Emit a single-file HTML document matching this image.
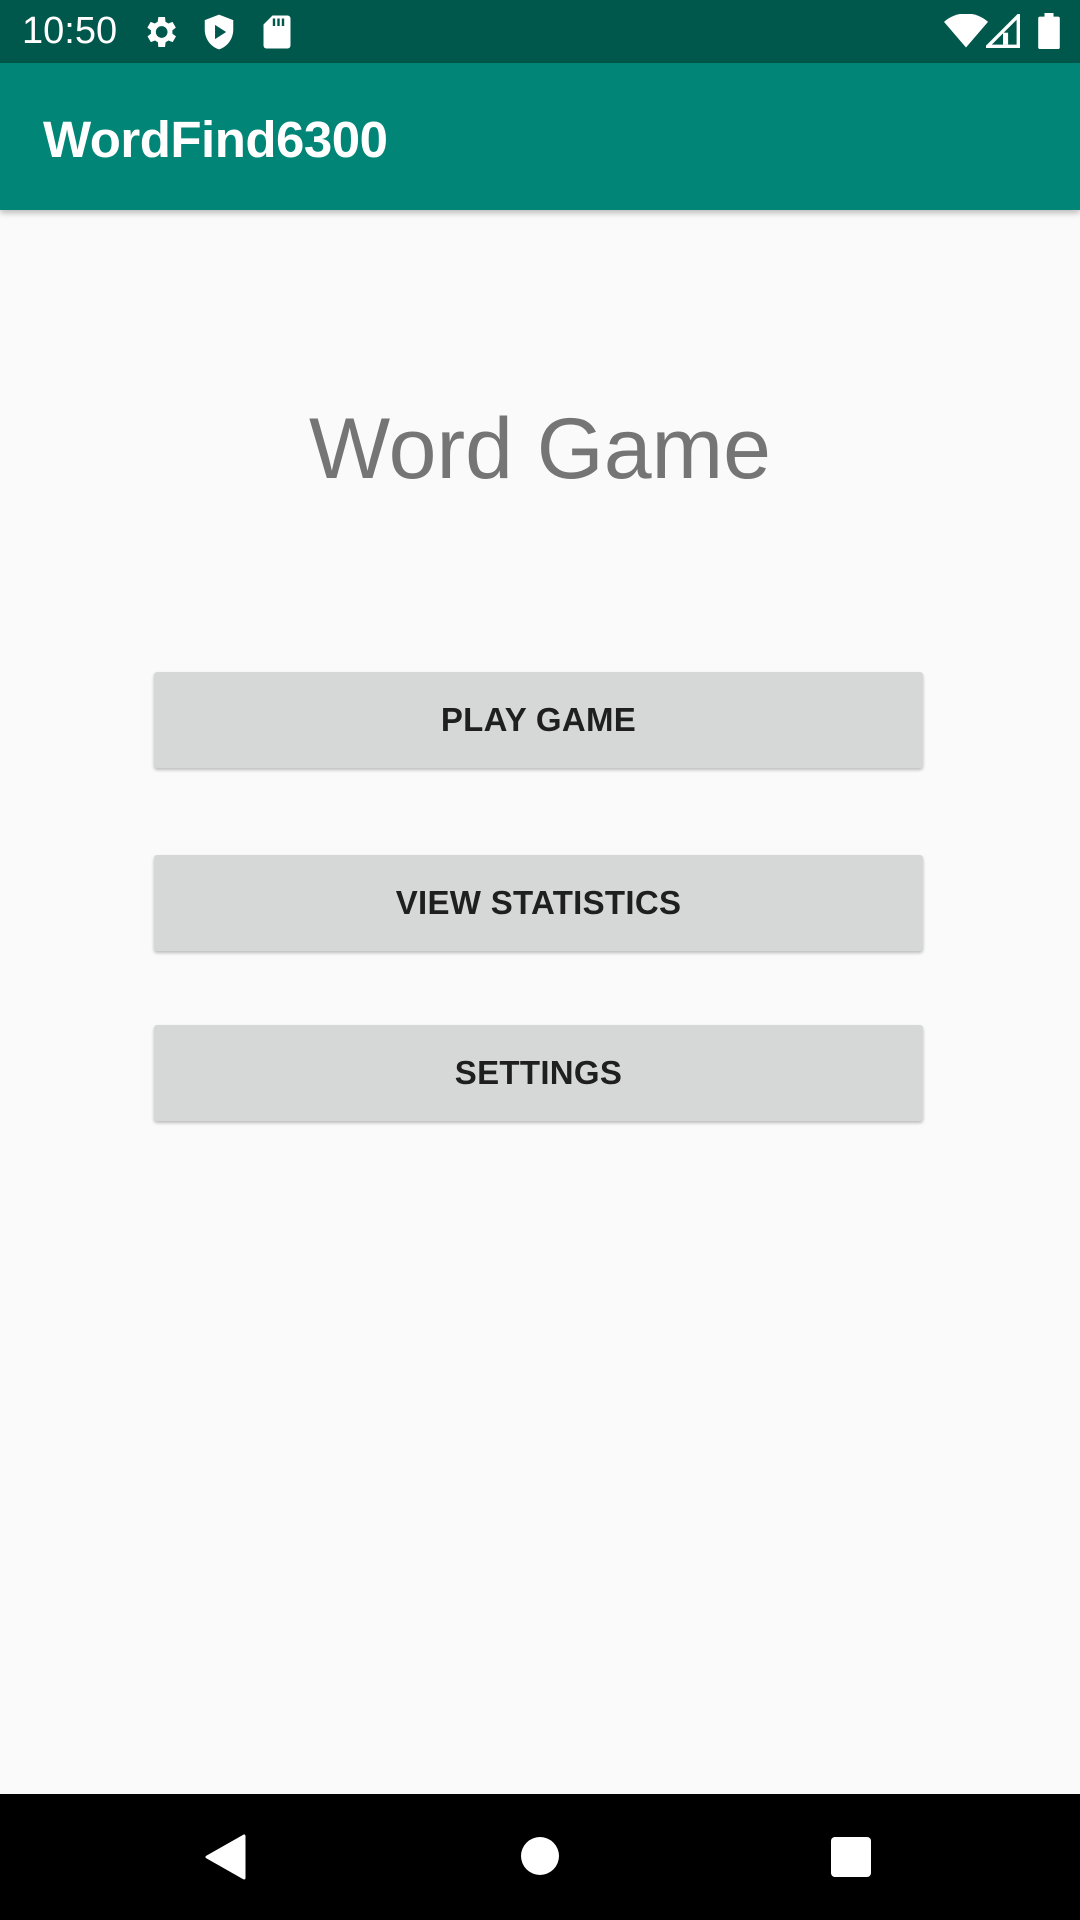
<!DOCTYPE html>
<html><head><meta charset="utf-8"><style>
*{margin:0;padding:0;box-sizing:border-box}
body{width:1080px;height:1920px;background:#fafafa;font-family:"Liberation Sans",Roboto,sans-serif;position:relative;overflow:hidden}
.sb{position:absolute;top:0;left:0;width:1080px;height:63px;background:#00574b;color:#fff}
.ab{position:absolute;top:63px;left:0;width:1080px;height:147px;background:#008577;box-shadow:0 3px 6px rgba(0,0,0,.25)}
.ab span{position:absolute;left:43px;top:47px;font-size:51px;color:#fff;font-weight:bold;letter-spacing:-0.5px}
.title{position:absolute;top:400px;left:0;width:1080px;text-align:center;font-size:86px;color:#757575}
.btn{position:absolute;left:154px;width:769px;height:96px;background:#d6d7d7;border-radius:3px;box-shadow:0 2px 3px rgba(0,0,0,.25);text-align:center;line-height:96px;font-size:33px;font-weight:bold;color:#1f1f1f;letter-spacing:0.3px}
.nav{position:absolute;top:1794px;left:0;width:1080px;height:126px;background:#000}
</style></head><body>
<div class="sb">
<span style="position:absolute;left:22px;top:10px;font-size:38px">10:50</span>
<svg style="position:absolute;left:140px;top:12px" width="40" height="40" viewBox="0 0 24 24"><path fill="#fff" d="M19.4 13a7.5 7.5 0 000-2l2.1-1.6-2-3.5-2.5 1a7 7 0 00-1.7-1L15 3h-4l-.4 2.9a7 7 0 00-1.7 1l-2.5-1-2 3.5L6.6 11a7.5 7.5 0 000 2l-2.1 1.6 2 3.5 2.5-1a7 7 0 001.7 1L11 21h4l.4-2.9a7 7 0 001.7-1l2.5 1 2-3.5zM13 15.5a3.5 3.5 0 110-7 3.5 3.5 0 010 7z"/></svg>
<svg style="position:absolute;left:203px;top:13px" width="32" height="38" viewBox="0 0 20 24"><path fill="#fff" d="M10 1L1 4.5v6c0 6 4 11 9 12.5 5-1.5 9-6.5 9-12.5v-6z"/><path fill="#00574b" d="M7.5 7.5v9l7-4.5z"/></svg>
<svg style="position:absolute;left:263px;top:14px" width="28" height="36" viewBox="0 0 18 24"><path fill="#fff" d="M6 1h10a2 2 0 012 2v18a2 2 0 01-2 2H2a2 2 0 01-2-2V7z"/><path stroke="#00574b" stroke-width="1.6" d="M7 3v5M10 3v5M13 3v5"/></svg>
<svg style="position:absolute;left:944px;top:14px" width="44" height="34" viewBox="0 0 24 18"><path fill="#fff" d="M12 18L0 4a18 18 0 0124 0z"/></svg>
<svg style="position:absolute;left:986px;top:14px" width="34" height="34" viewBox="0 0 20 20"><path fill="none" stroke="#fff" stroke-width="2" d="M19 1v18H1z"/><path fill="#fff" d="M10 11h3v7h-3z"/></svg>
<svg style="position:absolute;left:1038px;top:13px" width="22" height="36" viewBox="0 0 12 20"><path fill="#fff" d="M3.5 0h5v2H11a1 1 0 011 1v16a1 1 0 01-1 1H1a1 1 0 01-1-1V3a1 1 0 011-1h2.5z"/></svg>
</div>
<div class="ab"><span>WordFind6300</span></div>
<div class="title">Word Game</div>
<div class="btn" style="top:672px">PLAY GAME</div>
<div class="btn" style="top:855px">VIEW STATISTICS</div>
<div class="btn" style="top:1025px">SETTINGS</div>
<div class="nav">
<svg style="position:absolute;left:204px;top:40px" width="42" height="46" viewBox="0 0 42 46"><path fill="#fff" d="M40 2v42L3 23z" stroke="#fff" stroke-width="3" stroke-linejoin="round"/></svg>
<div style="position:absolute;left:521px;top:43px;width:38px;height:38px;border-radius:50%;background:#fff"></div>
<div style="position:absolute;left:831px;top:43px;width:40px;height:40px;border-radius:4px;background:#fff"></div>
</div>
</body></html>
